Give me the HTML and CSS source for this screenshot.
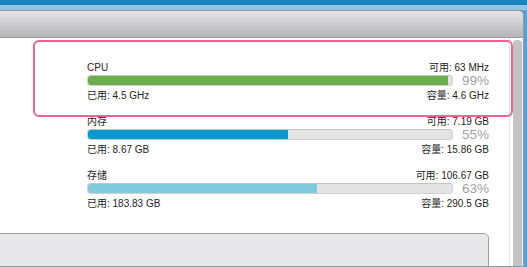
FILE: index.html
```html
<!DOCTYPE html>
<html lang="zh-CN">
<head>
  <meta charset="UTF-8">
  <title>资源监控</title>
  <link rel="stylesheet" href="styles.css">
</head>
<body>
  <div class="window">
    <div class="window-header"></div>
    <div class="window-body">
      <div class="content">
        <div class="highlight"></div>

        <div class="usage-row">
          <div class="line">
            <span>CPU</span>
            <span>可用: 63 MHz</span>
          </div>
          <div class="bar-line">
            <div class="bar"><div class="fill cpu" style="width: 99%;"></div></div>
            <span class="pct">99%</span>
          </div>
          <div class="line used">
            <span>已用: 4.5 GHz</span>
            <span>容量: 4.6 GHz</span>
          </div>
        </div>

        <div class="usage-row">
          <div class="line">
            <span>内存</span>
            <span>可用: 7.19 GB</span>
          </div>
          <div class="bar-line">
            <div class="bar"><div class="fill memory" style="width: 55%;"></div></div>
            <span class="pct">55%</span>
          </div>
          <div class="line used">
            <span>已用: 8.67 GB</span>
            <span>容量: 15.86 GB</span>
          </div>
        </div>

        <div class="usage-row">
          <div class="line">
            <span>存储</span>
            <span>可用: 106.67 GB</span>
          </div>
          <div class="bar-line">
            <div class="bar"><div class="fill storage" style="width: 63%;"></div></div>
            <span class="pct">63%</span>
          </div>
          <div class="line used">
            <span>已用: 183.83 GB</span>
            <span>容量: 290.5 GB</span>
          </div>
        </div>

        <div class="bottom-panel"></div>
      </div>
      <div class="scrollbar">
        <div class="thumb"></div>
      </div>
    </div>
  </div>
</body>
</html>
```

FILE: styles.css
```css
body {
  margin: 0;
  height: 267px;
  overflow: hidden;
  font-family: 'Liberation Sans', 'Noto Sans CJK SC', Arial, sans-serif;
  font-size: 10px;
  color: #1e1e1e;
  background: linear-gradient(#1a84bf 0, #1a84bf 5px, #92c3e3 5px, #92c3e3 10px, #5b9fd3 10px);
}

.window {
  margin-top: 10px;
  margin-left: -10px;
  width: 534px;
  height: 257px;
  box-sizing: border-box;
  border: 1px solid #94999e;
  border-radius: 0 6px 0 0;
  background: #fff;
  display: flex;
  flex-direction: column;
  overflow: hidden;
}

.window-header {
  height: 26px;
  flex-shrink: 0;
  background: linear-gradient(#e4e4e8, #b5b5b9);
  border-bottom: 1px solid #9c9ca0;
}

.window-body {
  flex: 1;
  display: flex;
}

.content {
  position: relative;
  width: 519px;
  padding: 22px 0 0 96px;
  box-sizing: border-box;
  border-right: 1px solid #e2e2e2;
}

.highlight {
  position: absolute;
  left: 42px;
  top: 2px;
  width: 480px;
  height: 77px;
  box-sizing: border-box;
  border: 2px solid #f2618f;
  border-radius: 6px;
}

.usage-row {
  width: 402px;
  margin-bottom: 11px;
}

.line {
  display: flex;
  justify-content: space-between;
  line-height: 15px;
}

.line.used {
  margin-top: 2px;
}

.bar-line {
  display: flex;
  align-items: center;
  height: 11px;
}

.bar {
  width: 366px;
  height: 11px;
  box-sizing: border-box;
  background: #e4e4e4;
  border: 1px solid #d0d0d0;
  border-top-color: #c4c4c4;
  border-radius: 4px;
  overflow: hidden;
}

.fill {
  height: 100%;
}

.fill.cpu {
  background: #6aaf4c;
}

.fill.memory {
  background: #0899cc;
}

.fill.storage {
  background: #80cbdc;
}

.pct {
  flex: 1;
  text-align: right;
  font-size: 13.5px;
  line-height: 11px;
  color: #a2a2a2;
}

.bottom-panel {
  margin-top: 22px;
  margin-left: -120px;
  width: 520px;
  height: 40px;
  background: #e8e8ea;
  border: 1px solid #a0a0a0;
  border-radius: 0 5px 0 0;
}

.scrollbar {
  width: 13px;
  padding: 2px 1px 0 3px;
  box-sizing: border-box;
  border-right: 1px solid #f0f0f0;
}

.thumb {
  width: 9px;
  height: 100%;
  background: #c3c3c3;
  border-radius: 4px 4px 0 0;
}
```
